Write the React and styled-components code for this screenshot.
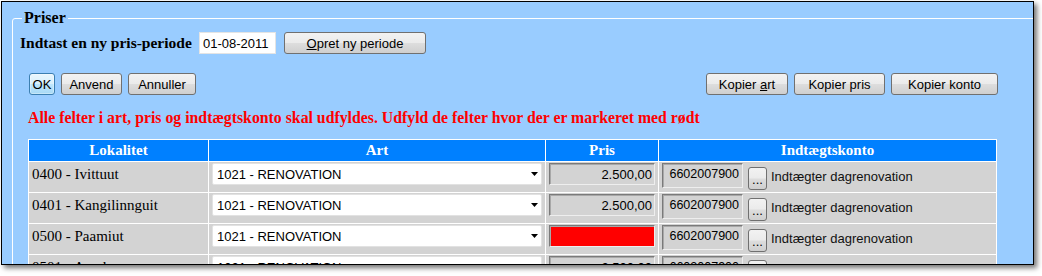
import React from "react";
import styled, { createGlobalStyle, css } from "styled-components";

const Global = createGlobalStyle`
  html, body { margin: 0; padding: 0; background: #fff; }
  body { width: 1042px; height: 276px; overflow: hidden; }
  *, *::before, *::after { box-sizing: border-box; }
`;

const serif = `"Liberation Serif", "Times New Roman", serif`;
const sans = `"Liberation Sans", Arial, sans-serif`;

const Window = styled.div`
  margin: 1px 0 0 1px;
  width: 1033px;
  height: 264px;
  border: 1px solid #000;
  background: #99ccff;
  box-shadow: 3px 3px 5px rgba(0, 0, 0, 0.55);
  overflow: hidden;
  padding-left: 10px;
`;

const Fieldset = styled.fieldset`
  margin: 7px 0 0 0;
  padding: 5px 0 0 7px;
  width: 1100px;
  min-width: 0;
  border: 1px solid #fff;
  border-radius: 3px;
`;

const Legend = styled.legend`
  margin-left: 2px;
  padding: 0 2px;
  font: bold 16px/18px ${serif};
  color: #000;
`;

const Content = styled.div`
  width: 978px;
`;

const PeriodRow = styled.div`
  display: flex;
  align-items: center;
  height: 22px;
`;

const PeriodLabel = styled.span`
  width: 179px;
  font: bold 15.5px/18px ${serif};
  color: #000;
  white-space: nowrap;
`;

const DateInput = styled.input`
  width: 77px;
  height: 22px;
  border: 1px solid #e4e4e4;
  background: #fff;
  padding: 0 0 0 3px;
  font: 13px ${sans};
  color: #000;
  outline: none;
`;

const Button = styled.button`
  display: inline-flex;
  align-items: center;
  justify-content: center;
  width: ${(p) => p.$w}px;
  height: 22px;
  margin-left: ${(p) => p.$ml || 0}px;
  padding: 0;
  border: 1px solid #707070;
  border-radius: 3px;
  background: linear-gradient(#f2f2f2 0%, #ebebeb 48%, #dddddd 52%, #cfcfcf 100%);
  font: 13px/15px ${sans};
  color: #000;
  white-space: nowrap;
  u { text-decoration: underline; text-underline-offset: 1px; }
  ${(p) =>
    p.$default &&
    css`
      border-color: #3c7fb1;
      background: linear-gradient(#eaf6fd 0%, #d9f0fc 48%, #bee6fd 52%, #a7d9f5 100%);
      box-shadow: inset 0 0 0 1px rgba(255, 255, 255, 0.35);
    `}
`;

const ActionRow = styled.div`
  display: flex;
  justify-content: space-between;
  margin-top: 19px;
  height: 22px;
`;

const ButtonGroup = styled.div`
  display: flex;
  gap: 6px;
  padding-left: ${(p) => p.$pl || 0}px;
`;

const Warning = styled.div`
  margin-top: 14px;
  padding-left: 8px;
  font: bold 15.8px/18px ${serif};
  color: #ff0000;
  white-space: nowrap;
`;

const Table = styled.table`
  margin: 12px 0 0 8px;
  width: 969px;
  table-layout: fixed;
  border-collapse: separate;
  border-spacing: 1px;
  background: #fff;
`;

const Th = styled.th`
  height: 21px;
  padding: 0;
  background: #0080ff;
  color: #fff;
  font: bold 15px/17px ${serif};
  text-align: center;
  vertical-align: middle;
`;

const Td = styled.td`
  height: 30px;
  padding: 0;
  background: #d3d3d3;
  vertical-align: top;
`;

const PlaceName = styled.div`
  padding: 4px 0 0 3px;
  font: 15px/17px ${serif};
  color: #000;
  white-space: nowrap;
`;

const SelectWrap = styled.div`
  position: relative;
  margin: 1px 0 0 3px;
  width: 330px;
  height: 22px;
`;

const Select = styled.select`
  appearance: none;
  width: 100%;
  height: 100%;
  border: 1px solid #e2e2e2;
  border-radius: 2px;
  background: #fff;
  padding: 0 0 0 4px;
  font: 13px ${sans};
  color: #000;
  outline: none;
`;

const Arrow = styled.svg`
  position: absolute;
  right: 4px;
  top: 9px;
  pointer-events: none;
`;

const insetField = css`
  border-style: solid;
  border-width: 1px;
  border-color: #7a7a7a #eeeeee #eeeeee #7a7a7a;
  box-shadow: inset 1px 1px 0 #a8a8a8;
  color: #000;
  text-align: right;
  outline: none;
`;

const PriceInput = styled.input`
  ${insetField};
  display: block;
  margin: 1px 0 0 3px;
  width: 106px;
  height: 22px;
  padding: 0 2px 0 0;
  font: 13px ${sans};
  background: ${(p) => (p.$error ? "#ff0000" : "#d3d3d3")};
`;

const AccountCell = styled.div`
  display: flex;
  align-items: flex-start;
  padding-left: 3px;
`;

const AccountInput = styled.input`
  ${insetField};
  margin-top: 1px;
  width: 81px;
  height: 25px;
  padding: 0 3px 3px 0;
  font: 12.5px ${sans};
  background: #d3d3d3;
`;

const DotsButton = styled.button`
  display: flex;
  align-items: flex-end;
  justify-content: center;
  margin: 5px 0 0 5px;
  width: 19px;
  height: 23px;
  padding: 0 0 3px 0;
  border: 1px solid #707070;
  border-radius: 3px;
  background: linear-gradient(#f2f2f2 0%, #ebebeb 48%, #dddddd 52%, #cfcfcf 100%);
  font: 13px/13px ${sans};
  color: #000;
`;

const AccountName = styled.span`
  margin: 7px 0 0 4px;
  font: 13px/15px ${sans};
  color: #111;
  white-space: nowrap;
`;

const rows = [
  { place: "0400 - Ivittuut", price: "2.500,00" },
  { place: "0401 - Kangilinnguit", price: "2.500,00" },
  { place: "0500 - Paamiut", price: "", error: true },
  { place: "0501 - Arsuk", price: "2.500,00" },
];

export default function App() {
  return (
    <>
      <Global />
      <Window>
        <Fieldset>
          <Legend>Priser</Legend>
          <Content>
            <PeriodRow>
              <PeriodLabel>Indtast en ny pris-periode</PeriodLabel>
              <DateInput defaultValue="01-08-2011" />
              <Button $w={142} $ml={8}>
                <span>
                  <u>O</u>pret ny periode
                </span>
              </Button>
            </PeriodRow>
            <ActionRow>
              <ButtonGroup $pl={9}>
                <Button $w={26} $default>OK</Button>
                <Button $w={61}>Anvend</Button>
                <Button $w={68}>Annuller</Button>
              </ButtonGroup>
              <ButtonGroup>
                <Button $w={82}>
                  <span>
                    Kopier <u>a</u>rt
                  </span>
                </Button>
                <Button $w={91}>Kopier pris</Button>
                <Button $w={107}>Kopier konto</Button>
              </ButtonGroup>
            </ActionRow>
            <Warning>
              Alle felter i art, pris og indtægtskonto skal udfyldes. Udfyld de felter hvor der er markeret med rødt
            </Warning>
            <Table>
              <colgroup>
                <col style={{ width: 179 }} />
                <col style={{ width: 336 }} />
                <col style={{ width: 112 }} />
                <col style={{ width: 337 }} />
              </colgroup>
              <thead>
                <tr>
                  <Th>Lokalitet</Th>
                  <Th>Art</Th>
                  <Th>Pris</Th>
                  <Th>Indtægtskonto</Th>
                </tr>
              </thead>
              <tbody>
                {rows.map((r) => (
                  <tr key={r.place}>
                    <Td>
                      <PlaceName>{r.place}</PlaceName>
                    </Td>
                    <Td>
                      <SelectWrap>
                        <Select defaultValue="1021">
                          <option value="1021">1021 - RENOVATION</option>
                        </Select>
                        <Arrow width="7" height="4" viewBox="0 0 7 4">
                          <path d="M0 0 H7 L3.5 4 Z" fill="#000" />
                        </Arrow>
                      </SelectWrap>
                    </Td>
                    <Td>
                      <PriceInput readOnly defaultValue={r.price} $error={r.error} />
                    </Td>
                    <Td>
                      <AccountCell>
                        <AccountInput readOnly defaultValue="6602007900" />
                        <DotsButton>...</DotsButton>
                        <AccountName>Indtægter dagrenovation</AccountName>
                      </AccountCell>
                    </Td>
                  </tr>
                ))}
              </tbody>
            </Table>
          </Content>
        </Fieldset>
      </Window>
    </>
  );
}
